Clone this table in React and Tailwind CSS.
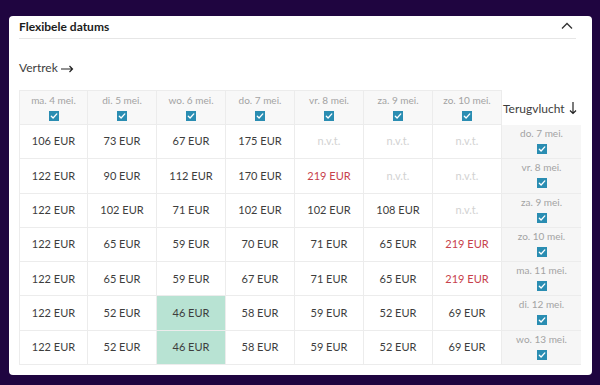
import React from "react";

const DEPART = ["ma. 4 mei.", "di. 5 mei.", "wo. 6 mei.", "do. 7 mei.", "vr. 8 mei.", "za. 9 mei.", "zo. 10 mei."];

// r = red (duur), g = green (goedkoopst), null = n.v.t.
const ROWS = [
  { ret: "do. 7 mei.", cells: ["106", "73", "67", "175", null, null, null] },
  { ret: "vr. 8 mei.", cells: ["122", "90", "112", "170", "219r", null, null] },
  { ret: "za. 9 mei.", cells: ["122", "102", "71", "102", "102", "108", null] },
  { ret: "zo. 10 mei.", cells: ["122", "65", "59", "70", "71", "65", "219r"] },
  { ret: "ma. 11 mei.", cells: ["122", "65", "59", "67", "71", "65", "219r"] },
  { ret: "di. 12 mei.", cells: ["122", "52", "46g", "58", "59", "52", "69"] },
  { ret: "wo. 13 mei.", cells: ["122", "52", "46g", "58", "59", "52", "69"] },
];

function Check() {
  return (
    <span className="flex h-[10px] w-[10px] items-center justify-center bg-[#2a8db2]">
      <svg width="8" height="8" viewBox="0 0 8 8" fill="none">
        <path d="M1.3 4.2 3.1 6 6.8 1.9" stroke="white" strokeWidth="1.3" strokeLinecap="round" strokeLinejoin="round" />
      </svg>
    </span>
  );
}

function PriceCell({ value, first }) {
  let cls = "text-[#3d3d3d]";
  let bg = "bg-white";
  let label = "n.v.t.";
  if (value === null) {
    cls = "text-[#d2d2d2] text-[10px]";
  } else if (value.endsWith("r")) {
    cls = "text-[#c7414c]";
    label = value.slice(0, -1) + " EUR";
  } else if (value.endsWith("g")) {
    bg = "bg-[#b8e3d3]";
    label = value.slice(0, -1) + " EUR";
  } else {
    label = value + " EUR";
  }
  return (
    <div
      className={`flex h-[34.3px] items-center justify-center border-b border-r border-[#ececec] text-[11px] ${bg} ${cls} ${first ? "border-l" : ""}`}
    >
      {label}
    </div>
  );
}

export default function App() {
  return (
    <div className="min-h-[385px] bg-[#1f0540] pl-[9px] pt-[16px] font-['Lato',sans-serif]">
      <div className="h-[359px] w-[583px] overflow-hidden rounded-[4px] bg-white px-[10px]">
        <div className="mr-[6px] flex h-[23px] items-center justify-between border-b border-[#e6e6e6]">
          <span className="text-[12px] font-bold text-[#1c1c1c]">Flexibele datums</span>
          <svg width="12" height="8" viewBox="0 0 12 8" fill="none" className="mr-[3px] mt-[-3px]">
            <path d="M1 6.5 6 1.5l5 5" stroke="#333" strokeWidth="1.3" />
          </svg>
        </div>

        <div className="mt-[21px] flex h-[16px] items-center gap-[3px] text-[12px] text-[#3d3d3d]">
          Vertrek
          <svg width="13" height="8" viewBox="0 0 13 8" fill="none" className="mt-[1px]">
            <path d="M0 4h11.5M8.5 1l3 3-3 3" stroke="#222" strokeWidth="1.2" />
          </svg>
        </div>

        <div className="mt-[14px] grid grid-cols-[repeat(7,69px)_79px]">
          {DEPART.map((d, i) => (
            <div
              key={d}
              className={`flex h-[35px] flex-col items-center justify-center gap-[5px] border-b border-r border-t border-[#ececec] bg-[#f8f8f8] ${i === 0 ? "border-l" : ""}`}
            >
              <span className="text-[10px] leading-[11px] text-[#a3a3a3]">{d}</span>
              <Check />
            </div>
          ))}
          <div className="flex h-[35px] items-center gap-[4px] pl-[1px] pt-[2px] text-[12px] text-[#3d3d3d]">
            Terugvlucht
            <svg width="8" height="13" viewBox="0 0 8 13" fill="none">
              <path d="M4 0v11.5M1 8.5l3 3 3-3" stroke="#222" strokeWidth="1.2" />
            </svg>
          </div>

          {ROWS.map((row) => (
            <React.Fragment key={row.ret}>
              {row.cells.map((c, i) => (
                <PriceCell key={i} value={c} first={i === 0} />
              ))}
              <div className="flex h-[34.3px] flex-col items-center justify-start gap-[5px] border-b border-[#ececec] bg-[#f6f6f6] pt-[3px]">
                <span className="text-[10px] leading-[11px] text-[#a3a3a3]">{row.ret}</span>
                <Check />
              </div>
            </React.Fragment>
          ))}
        </div>
      </div>
    </div>
  );
}
